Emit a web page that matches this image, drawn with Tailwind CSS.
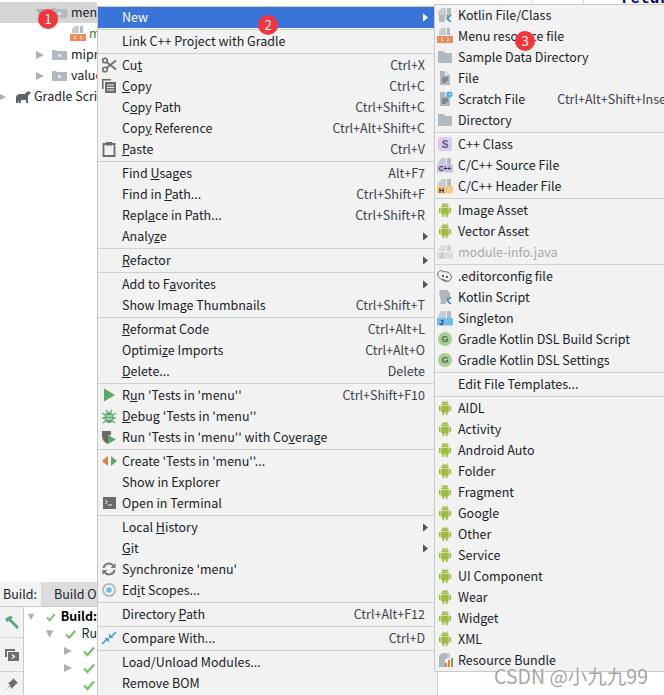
<!DOCTYPE html>
<html lang="en">
<head>
<meta charset="UTF-8">
<title>New menu</title>
<script src="https://cdn.jsdelivr.net/npm/@tailwindcss/browser@4"></script>
</head>
<body class="bg-white overflow-hidden">

<!-- shared icons -->
<svg class="hidden">
  <symbol id="android" viewBox="0 0 16 16"><g fill="#9dbb3e"><path d="M4.2 5.2a3.8 3.8 0 0 1 7.6 0z"/><rect x="4.2" y="5.8" width="7.6" height="6.6" rx="1"/><rect x="1.9" y="5.8" width="1.7" height="5.2" rx=".85"/><rect x="12.4" y="5.8" width="1.7" height="5.2" rx=".85"/><rect x="5.4" y="11.5" width="1.8" height="3.7" rx=".9"/><rect x="8.8" y="11.5" width="1.8" height="3.7" rx=".9"/></g><path d="M5.6 .7l1 1.6M10.4 .7l-1 1.6" stroke="#9dbb3e" stroke-width=".7"/><circle cx="6.4" cy="3.6" r=".5" fill="#fff"/><circle cx="9.6" cy="3.6" r=".5" fill="#fff"/></symbol>
  <symbol id="folder" viewBox="0 0 16 16"><path d="M1 2h6l1 2h7v10H1z" fill="#b1bac0"/></symbol>
  <symbol id="docline" viewBox="0 0 16 16"><path d="M3 1h5v4h5v10H3z" fill="#aeb7bd"/><path d="M9 1l4 3H9z" fill="#ccd1d4"/><path d="M5 8h6M5 10h6M5 12h4" stroke="#555b60" stroke-width="1"/></symbol>
  <symbol id="ftop" viewBox="0 0 16 16"><path d="M5 1h4v7H1V5z" fill="#c7cccf"/><path d="M10 1h4v7h-4z" fill="#b4bbc0"/></symbol>
  <symbol id="kbadge" viewBox="0 0 16 16"><path d="M9 15V8l3 0-3 3.5z" fill="#f28a2e"/><path d="M9 11.5L12.5 8H15l-3.5 3.5L15 15h-2.5z" fill="#3b8fd8"/></symbol>
  <symbol id="gicon" viewBox="0 0 16 16"><circle cx="8" cy="8" r="7" fill="#a7cf92"/><text x="8" y="11.3" font-size="9" font-weight="700" font-family="Liberation Sans" text-anchor="middle" fill="#4e6a4e">G</text></symbol>
  <symbol id="check" viewBox="0 0 12 12"><path d="M1 6.5L4.5 10 11 2.5" fill="none" stroke="#7ec06f" stroke-width="2.4"/></symbol>
  <symbol id="tdown" viewBox="0 0 10 10"><path d="M1 1h8L5 9z" fill="#b0b0b0"/></symbol>
  <symbol id="tright" viewBox="0 0 10 10"><path d="M1 1v8l8-4z" fill="#b0b0b0"/></symbol>
  <symbol id="tfolder" viewBox="0 0 15 11"><path d="M0 1h4l1 1h10v9H0z" fill="#b1bac0"/><circle cx="7.5" cy="6.5" r="1.6" fill="#f0f0f0"/></symbol>
  <symbol id="xml" viewBox="0 0 16 16"><path d="M5 0h4v7H2V3z" fill="#c7cccf"/><path d="M10 0h3v7h-3z" fill="#b4bbc0"/><rect x="0" y="8" width="16" height="7" fill="#ef8a5f"/><path d="M6 9.8L4 11.5l2 1.7M10 9.8l2 1.7-2 1.7" fill="none" stroke="#fff" stroke-width="1"/></symbol>
  <symbol id="arrow" viewBox="0 0 6 10"><path d="M0 0v10l6-5z"/></symbol>
</svg>

<div class="relative w-[664px] h-[695px] overflow-hidden bg-white font-['Noto_Sans_CJK_SC','Noto_Sans',sans-serif] text-[12.5px] text-[#1c1c28]">

  <!-- left column: project tree and build panel, behind the menu -->
  <div class="flex flex-col w-[97px] h-full pt-[2px]">
    <div class="flex items-center h-[21px] bg-[#d5d5d5] pl-[35px] whitespace-nowrap overflow-hidden">
      <svg class="w-[10px] h-[10px] mr-[7px] shrink-0"><use href="#tdown"/></svg>
      <svg class="w-[15px] h-[11px] mr-[4px] shrink-0"><use href="#tfolder"/></svg>menu
    </div>
    <div class="flex items-center h-[21px] pl-[70px] text-[#2a8a2a] overflow-hidden">
      <svg class="w-[16px] h-[16px] mr-[3px] shrink-0"><use href="#xml"/></svg>m
    </div>
    <div class="flex items-center h-[21px] pl-[35px] whitespace-nowrap overflow-hidden">
      <svg class="w-[10px] h-[10px] mr-[7px] shrink-0"><use href="#tright"/></svg>
      <svg class="w-[15px] h-[11px] mr-[4px] shrink-0"><use href="#tfolder"/></svg>mipmap
    </div>
    <div class="flex items-center h-[21px] pl-[35px] whitespace-nowrap overflow-hidden">
      <svg class="w-[10px] h-[10px] mr-[7px] shrink-0"><use href="#tright"/></svg>
      <svg class="w-[15px] h-[11px] mr-[4px] shrink-0"><use href="#tfolder"/></svg>values
    </div>
    <div class="flex items-center h-[21px] whitespace-nowrap overflow-hidden">
      <svg class="w-[10px] h-[10px] -ml-[3px] mr-[8px] shrink-0"><use href="#tright"/></svg>
      <svg class="w-[16px] h-[12px] mr-[3px] shrink-0" viewBox="0 0 16 12"><path d="M1 12V7c0-3 2-4 5-4h4c1-2 3-3 5-2 1 .7 1 2-.5 2-1 0-1 2-1.500 3v6h-2V9H6v3H4V9L3 12z" fill="#5d6469"/></svg>Gradle Scripts
    </div>

    <div class="mt-auto h-[113px] bg-[#f2f2f2] flex flex-col overflow-hidden">
      <div class="flex h-[25px] shrink-0 items-center border-b border-[#c9c9c9]">
        <span class="pl-[3px] w-[41px]">Build:</span>
        <span class="flex items-center h-full bg-[#dcdcdc] flex-1 pl-[13px] whitespace-nowrap overflow-hidden">Build O</span>
      </div>
      <div class="flex flex-1">
        <div class="w-[24px] shrink-0 border-r border-[#c9c9c9] flex flex-col items-center">
          <div class="h-[31px] w-full shrink-0 flex items-center justify-center border-b border-[#d4d4d4]">
            <svg class="w-[16px] h-[16px]" viewBox="0 0 16 16"><path d="M1 5l5-3 3 1-2 2 8 8-2 2-8-8-2 1z" fill="#56a574"/></svg>
          </div>
          <div class="h-[34px] w-full shrink-0 flex items-center justify-center border-b border-[#d4d4d4]">
            <svg class="w-[16px] h-[16px]" viewBox="0 0 16 16"><path d="M1 2h10v2H3v6H1z" fill="#6e6e6e"/><rect x="4" y="5" width="11" height="9" fill="#6e6e6e"/><path d="M8 7.500l2.500 2-2.500 2" fill="none" stroke="#fff" stroke-width="1.200"/></svg>
          </div>
          <div class="h-[24px] w-full shrink-0 flex items-center justify-center">
            <svg class="w-[14px] h-[14px]" viewBox="0 0 14 14"><path d="M8 1l5 5-2 1-3 3-1 2-2-3-4 4 4-5-2-2 2-1 3-3z" fill="#6e6e6e"/></svg>
          </div>
        </div>
        <div class="flex-1 bg-white pt-px whitespace-nowrap overflow-hidden [&>div]:flex [&>div]:items-center [&>div]:h-[17px]">
          <div class="pl-[3px]"><svg class="w-[10px] h-[10px] mr-[11px]"><use href="#tdown"/></svg><svg class="w-[12px] h-[12px] mr-[5px]"><use href="#check"/></svg><b class="text-black">Build:</b></div>
          <div class="pl-[21px]"><svg class="w-[10px] h-[10px] mr-[11px]"><use href="#tdown"/></svg><svg class="w-[12px] h-[12px] mr-[5px]"><use href="#check"/></svg>Ru</div>
          <div class="pl-[39px]"><svg class="w-[10px] h-[10px] mr-[10px]"><use href="#tright"/></svg><svg class="w-[12px] h-[12px]"><use href="#check"/></svg></div>
          <div class="pl-[39px]"><svg class="w-[10px] h-[10px] mr-[10px]"><use href="#tright"/></svg><svg class="w-[12px] h-[12px]"><use href="#check"/></svg></div>
          <div class="pl-[59px]"><svg class="w-[12px] h-[12px]"><use href="#check"/></svg></div>
        </div>
      </div>
    </div>
  </div>

  <!-- editor remains above the sub menu -->
  <div class="absolute left-[532px] top-0 w-px h-[4px] bg-[#dddddd]"></div>
  <div class="absolute left-[583px] top-0 w-px h-[4px] bg-[#dddddd]"></div>
  <div class="absolute left-[621px] -top-[10px] font-['Liberation_Mono',monospace] text-[16px] font-bold text-[#000080] leading-[18px]">return</div>

  <!-- main context menu -->
  <div class="absolute left-[97px] top-[6px] w-[341px] h-[700px] bg-[#f2f2f2] border border-[#c9c9c9] pt-0 whitespace-nowrap
    [&>div]:flex [&>div]:items-center [&>div]:h-[21px] [&>div]:pb-px [&>div]:pr-[12px]
    [&>div>b]:w-[24px] [&>div>b]:shrink-0 [&>div>b]:pl-[3px] [&>div>b]:font-normal
    [&>div>b>svg]:w-[16px] [&>div>b>svg]:h-[16px]
    [&>div>em]:ml-auto [&>div>em]:not-italic [&>div>em]:text-[#3f414c]
    [&>div>em>svg]:w-[5px] [&>div>em>svg]:h-[9px] [&>div>em>svg]:-mr-[3px] [&>div>em>svg]:fill-[#555555]
    [&>hr]:my-px [&>hr]:border-[#cfcfcf]">
    <div class="bg-[#3a74d8] text-white"><b></b>New<em><svg class="fill-white!" viewBox="0 0 6 10"><use href="#arrow"/></svg></em></div>
    <hr>
    <div><b></b>Link C++ Project with Gradle</div>
    <hr>
    <div><b><svg viewBox="0 0 16 16"><circle cx="4" cy="3.500" r="2.300" fill="none" stroke="#6b6b6b" stroke-width="1.600"/><circle cx="4" cy="12.500" r="2.300" fill="none" stroke="#6b6b6b" stroke-width="1.600"/><path d="M5.500 5L15 12.500M5.500 11L15 3.500" stroke="#6b6b6b" stroke-width="1.600"/></svg></b><span>Cu<u>t</u></span><em>Ctrl+X</em></div>
    <div><b><svg viewBox="0 0 16 16"><path d="M1 1h9v1.500H2.500V11H1z" fill="#6b6b6b"/><rect x="4" y="4" width="11" height="11" fill="#6b6b6b"/><path d="M6 7h7M6 9.500h7M6 12h7" stroke="#f2f2f2"/></svg></b><span><u>C</u>opy</span><em>Ctrl+C</em></div>
    <div><b></b><span>C<u>o</u>py Path</span><em>Ctrl+Shift+C</em></div>
    <div><b></b><span>Cop<u>y</u> Reference</span><em>Ctrl+Alt+Shift+C</em></div>
    <div><b><svg viewBox="0 0 16 16"><path d="M2.500 3h11v12h-11z" fill="none" stroke="#6b6b6b" stroke-width="1.800"/><rect x="5" y="1" width="6" height="3.500" fill="#6b6b6b"/></svg></b><span><u>P</u>aste</span><em>Ctrl+V</em></div>
    <hr>
    <div><b></b><span>Find <u>U</u>sages</span><em>Alt+F7</em></div>
    <div><b></b><span>Find in <u>P</u>ath...</span><em>Ctrl+Shift+F</em></div>
    <div><b></b><span>Repl<u>a</u>ce in Path...</span><em>Ctrl+Shift+R</em></div>
    <div><b></b><span>Analy<u>z</u>e</span><em><svg viewBox="0 0 6 10"><use href="#arrow"/></svg></em></div>
    <hr>
    <div><b></b><span><u>R</u>efactor</span><em><svg viewBox="0 0 6 10"><use href="#arrow"/></svg></em></div>
    <hr>
    <div><b></b><span>Add to F<u>a</u>vorites</span><em><svg viewBox="0 0 6 10"><use href="#arrow"/></svg></em></div>
    <div><b></b>Show Image Thumbnails<em>Ctrl+Shift+T</em></div>
    <hr>
    <div><b></b><span><u>R</u>eformat Code</span><em>Ctrl+Alt+L</em></div>
    <div><b></b><span>Optimi<u>z</u>e Imports</span><em>Ctrl+Alt+O</em></div>
    <div><b></b><span><u>D</u>elete...</span><em>Delete</em></div>
    <hr>
    <div><b><svg viewBox="0 0 16 16"><path d="M3 1.500v13L14 8z" fill="#59a869"/></svg></b><span>R<u>u</u>n 'Tests in 'menu''</span><em>Ctrl+Shift+F10</em></div>
    <div><b><svg viewBox="0 0 16 16"><ellipse cx="8" cy="9.500" rx="4.500" ry="5.500" fill="#59a869"/><path d="M1 5l3 2M15 5l-3 2M1 10h3M15 10h-3M2 15l2.500-2M14 15l-2.500-2M5 2l1.500 2M11 2L9.500 4" stroke="#59a869" stroke-width="1.300"/><path d="M5 8h6M5 11h6" stroke="#f2f2f2"/></svg></b><span><u>D</u>ebug 'Tests in 'menu''</span></div>
    <div><b><svg viewBox="0 0 16 16"><path d="M1 2h9v4H8v7l-2 2c-3-2-5-5-5-8z" fill="#6b6b6b"/><path d="M7 6v9l8-4.500z" fill="#59a869"/></svg></b><span>Run 'Tests in 'menu'' with Co<u>v</u>erage</span></div>
    <hr>
    <div><b><svg viewBox="0 0 16 16"><path d="M7 3v10L1 8z" fill="#ec7a3c"/><path d="M10 3v10l6-5z" fill="#59a869"/></svg></b>Create 'Tests in 'menu''...</div>
    <div><b></b>Show in Explorer</div>
    <div><b><svg viewBox="0 0 16 16"><rect x="2" y="2" width="13" height="12" fill="#6b6b6b"/><path d="M4 5l2.500 2L4 9M7 10h4" fill="none" stroke="#f2f2f2"/></svg></b>Open in Terminal</div>
    <hr>
    <div><b></b><span>Local <u>H</u>istory</span><em><svg viewBox="0 0 6 10"><use href="#arrow"/></svg></em></div>
    <div><b></b><span><u>G</u>it</span><em><svg viewBox="0 0 6 10"><use href="#arrow"/></svg></em></div>
    <div><b><svg viewBox="0 0 16 16"><path d="M2.500 7a5.500 5.500 0 0 1 10-2M13.500 9a5.500 5.500 0 0 1-10 2" fill="none" stroke="#777777" stroke-width="2"/><path d="M14.500 2v5h-5zM1.500 14V9h5z" fill="#777777"/></svg></b>Synchronize 'menu'</div>
    <div><b><svg viewBox="0 0 16 16"><circle cx="8" cy="8" r="6" fill="none" stroke="#b3bcc2" stroke-width="2"/><circle cx="8" cy="8" r="2.800" fill="#6cc0e8"/></svg></b><span>Ed<u>i</u>t Scopes...</span></div>
    <hr>
    <div><b></b><span>Directory <u>P</u>ath</span><em>Ctrl+Alt+F12</em></div>
    <hr>
    <div><b><svg viewBox="0 0 16 16"><path d="M1 14l5-5M15 2l-5 5" stroke="#3f9ddb" stroke-width="1.600"/><path d="M8 8H3.500L8 12.500zM8 8h4.500L8 3.500z" fill="#3f9ddb"/></svg></b>Compare With...<em>Ctrl+D</em></div>
    <hr>
    <div><b></b>Load/Unload Modules...</div>
    <div><b></b>Remove BOM</div>
  </div>

  <!-- New sub menu -->
  <div class="absolute left-[434px] top-[4px] w-[240px] h-[668px] bg-[#f2f2f2] border border-[#c9c9c9] whitespace-nowrap
    [&>div]:flex [&>div]:items-center [&>div]:h-[21px] [&>div]:pb-px
    [&>div>b]:w-[23px] [&>div>b]:shrink-0 [&>div>b]:pl-[2px] [&>div>b]:font-normal
    [&>div>b>svg]:w-[16px] [&>div>b>svg]:h-[16px]
    [&>hr]:my-px [&>hr]:border-[#cfcfcf]">
    <div><b><svg viewBox="0 0 16 16"><use href="#ftop"/><path d="M2 8h6v7H2z" fill="#b4bbc0"/><use href="#kbadge"/></svg></b>Kotlin File/Class</div>
    <div><b><svg><use href="#xml"/></svg></b>Menu resource file</div>
    <div><b><svg><use href="#folder"/></svg></b>Sample Data Directory</div>
    <div><b><svg><use href="#docline"/></svg></b>File</div>
    <div><b><svg viewBox="0 0 16 16"><use href="#docline"/><circle cx="12.500" cy="3.500" r="3" fill="#40b0e8"/><path d="M12.500 2v1.800h1.500" fill="none" stroke="#fff" stroke-width=".8"/></svg></b>Scratch File<span class="ml-[32px] text-[#3f414c]">Ctrl+Alt+Shift+Insert</span></div>
    <div><b><svg><use href="#folder"/></svg></b>Directory</div>
    <hr>
    <div><b><svg viewBox="0 0 16 16"><rect x="1" y="1" width="14" height="14" rx="2" fill="#d9cbf0"/><text x="8" y="12" font-size="10" font-weight="700" font-family="Liberation Sans" text-anchor="middle" fill="#5c5c70">S</text></svg></b>C++ Class</div>
    <div><b><svg viewBox="0 0 16 16"><use href="#ftop"/><rect y="8" width="16" height="7.500" fill="#cdbdeb"/><text x="8" y="14.300" font-size="6.500" font-weight="700" font-family="Liberation Sans" text-anchor="middle" fill="#33334a">C++</text></svg></b>C/C++ Source File</div>
    <div><b><svg viewBox="0 0 16 16"><use href="#ftop"/><rect y="8" width="16" height="7.500" fill="#f4c988"/><text x="4.500" y="14.500" font-size="7.500" font-weight="700" font-family="Liberation Sans" text-anchor="middle" fill="#33334a">H</text></svg></b>C/C++ Header File</div>
    <hr>
    <div><b><svg><use href="#android"/></svg></b>Image Asset</div>
    <div><b><svg><use href="#android"/></svg></b>Vector Asset</div>
    <div class="text-[#a8a8a8]"><b><svg viewBox="0 0 16 16"><path d="M5 1h4v6H1V5z" fill="#dcdcdc"/><path d="M10 1h4v6h-4z" fill="#d2d2d2"/><rect y="8" width="16" height="7" fill="#dcdcdc"/><text x="4.500" y="14.300" font-size="7" font-family="Liberation Sans" text-anchor="middle" fill="#a0a0a0">J</text></svg></b>module-info.java</div>
    <hr>
    <div><b><svg viewBox="0 0 16 16"><path d="M1 5c1-3 4-3 5-1 2-1 6 0 8 3 1 2 0 5-2 6-3 1-6 0-8-2C2 10 0 8 1 5z" fill="#f2f2f2" stroke="#666666" stroke-width="1"/><circle cx="6" cy="8" r="1.100" fill="#333333"/><circle cx="10" cy="9" r="1.100" fill="#333333"/><path d="M5 11l5 2" stroke="#666666"/></svg></b>.editorconfig file</div>
    <div><b><svg viewBox="0 0 16 16"><path d="M3 1h8v2h2v5H9v7H3c1-2 1-4 0-7-1-3-1-5 0-7z" fill="#aeb7bd"/><use href="#kbadge"/></svg></b>Kotlin Script</div>
    <div><b><svg viewBox="0 0 16 16"><use href="#ftop"/><rect y="8" width="16" height="7.500" fill="#6fbde8"/><text x="4.500" y="14.500" font-size="7.500" font-weight="700" font-family="Liberation Sans" text-anchor="middle" fill="#23334a">J</text></svg></b>Singleton</div>
    <div><b><svg><use href="#gicon"/></svg></b>Gradle Kotlin DSL Build Script</div>
    <div><b><svg><use href="#gicon"/></svg></b>Gradle Kotlin DSL Settings</div>
    <hr>
    <div><b></b>Edit File Templates...</div>
    <hr>
    <div><b><svg><use href="#android"/></svg></b>AIDL</div>
    <div><b><svg><use href="#android"/></svg></b>Activity</div>
    <div><b><svg><use href="#android"/></svg></b>Android Auto</div>
    <div><b><svg><use href="#android"/></svg></b>Folder</div>
    <div><b><svg><use href="#android"/></svg></b>Fragment</div>
    <div><b><svg><use href="#android"/></svg></b>Google</div>
    <div><b><svg><use href="#android"/></svg></b>Other</div>
    <div><b><svg><use href="#android"/></svg></b>Service</div>
    <div><b><svg><use href="#android"/></svg></b>UI Component</div>
    <div><b><svg><use href="#android"/></svg></b>Wear</div>
    <div><b><svg><use href="#android"/></svg></b>Widget</div>
    <div><b><svg><use href="#android"/></svg></b>XML</div>
    <div><b><svg viewBox="0 0 16 16"><path d="M5 1h5v6H8v8H2V4z" fill="#aeb7bd"/><path d="M10 1h3v5h-3z" fill="#c7cccf"/><rect x="8" y="11" width="2" height="4" fill="#ef7d3a"/><rect x="11" y="8" width="2" height="7" fill="#ef7d3a"/><rect x="14" y="6" width="2" height="9" fill="#6aa84f"/></svg></b>Resource Bundle</div>
  </div>

  <!-- step badges and watermark -->
  <span class="absolute left-[38px] top-[9px] w-[20px] h-[20px] rounded-full bg-[#f3363c] text-white text-[13px] flex items-center justify-center">1</span>
  <span class="absolute left-[258px] top-[15px] w-[20px] h-[20px] rounded-full bg-[#f3363c] text-white text-[13px] flex items-center justify-center">2</span>
  <span class="absolute left-[515px] top-[31px] w-[20px] h-[20px] rounded-full bg-[#f3363c] text-white text-[13px] flex items-center justify-center">3</span>
  <span class="absolute left-[494px] top-[662px] text-[19.5px] leading-[28px] text-[#9a9a9a]/90 whitespace-nowrap [text-shadow:1px_1px_0_#ffffffcc]">CSDN @小九九99</span>
</div>
</body>
</html>
